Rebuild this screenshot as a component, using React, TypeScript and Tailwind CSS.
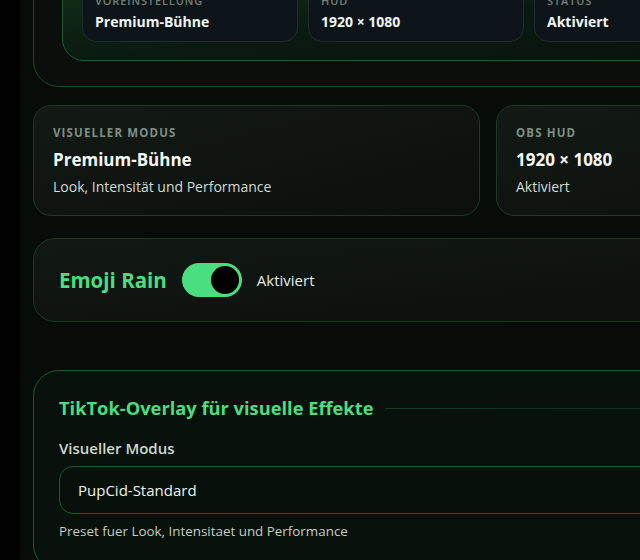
import React from "react";

function TopCard({ label, value }: { label: string; value: string }) {
  return (
    <div className="w-[216px] shrink-0 rounded-[14px] border border-[#1f2b2c] bg-[#0e151a] px-[12px] pt-[10px] pb-[9px]">
      <div className="text-[11px] font-semibold uppercase leading-4 tracking-[0.08em] text-[#6f8074]">{label}</div>
      <div className="mt-[3px] text-[14px] font-bold leading-5 text-[#f2f5f2]">{value}</div>
    </div>
  );
}

function InfoCard({ label, value, desc }: { label: string; value: string; desc: string }) {
  return (
    <div className="rounded-[18px] border border-[#1c3b27] bg-gradient-to-br from-[#131915] to-[#0b100d] px-[19px] pt-[19px] pb-[18px]">
      <div className="text-[11.5px] font-bold uppercase leading-4 tracking-[0.1em] text-[#7f9083]">{label}</div>
      <div className="mt-[7px] text-[17px] font-bold leading-6 text-[#f4f7f4]">{value}</div>
      <div className="mt-[5px] text-[14px] leading-5 text-[#d3dbd4]">{desc}</div>
    </div>
  );
}

export default function App() {
  return (
    <div className="flex h-[560px] w-[640px] overflow-hidden bg-[#010201] font-['Open_Sans',sans-serif]">
      <div className="w-[20px] shrink-0 bg-[#010201]" />
      <div className="flex-1 overflow-hidden bg-[#070c09]">
        <div className="ml-[13px] mt-[-60px] w-[910px]">
          {/* top container */}
          <div className="rounded-[26px] border border-[#1a4a28] bg-[#0a0f0c] px-[28px] pt-[20px] pb-[25px]">
            <div className="rounded-[22px] border border-[#1f5a2d] bg-gradient-to-br from-[#11361c] via-[#0b1a10] to-[#0a110c] px-[19px] pt-[20px] pb-[18px]">
              <div className="flex gap-[10px]">
                <TopCard label="Voreinstellung" value="Premium-Bühne" />
                <TopCard label="HUD" value="1920 × 1080" />
                <TopCard label="Status" value="Aktiviert" />
              </div>
            </div>
          </div>

          {/* info cards */}
          <div className="mt-[18px] grid grid-cols-2 gap-[16px]">
            <InfoCard label="Visueller Modus" value="Premium-Bühne" desc="Look, Intensität und Performance" />
            <InfoCard label="OBS HUD" value="1920 × 1080" desc="Aktiviert" />
          </div>

          {/* emoji rain */}
          <div className="mt-[22px] flex items-center rounded-[22px] border border-[#1b3a25] bg-gradient-to-br from-[#121814] to-[#0a0f0c] px-[25px] pt-[24px] pb-[24px]">
            <div className="text-[20.5px] font-bold leading-7 text-[#4ade80]">Emoji Rain</div>
            <div className="ml-[15px] flex h-[34px] w-[60px] items-center justify-end rounded-full bg-[#4ade80] pr-[3px]">
              <div className="h-[28px] w-[28px] rounded-full bg-black" />
            </div>
            <div className="ml-[15px] text-[15px] leading-5 text-[#e6ece6]">Aktiviert</div>
          </div>

          {/* section */}
          <div className="mt-[48px] rounded-[26px] border border-[#1d5a2f] bg-[#08110b] px-[25px] pt-[23px] pb-[30px]">
            <div className="flex items-center">
              <div className="text-[18.3px] font-bold leading-7 text-[#4ade80]">TikTok-Overlay für visuelle Effekte</div>
              <div className="ml-[12px] h-px flex-1 bg-gradient-to-r from-[#163a20] to-[#0f2416]" />
            </div>
            <div className="mt-[16px] text-[15px] font-semibold leading-5 text-[#cfd9cf]">Visueller Modus</div>
            <div className="mt-[8px] flex h-[48px] items-center rounded-[14px] border border-[#1d5a2c] bg-[#07100a] px-[18px] text-[15px] text-[#eef2ee]">PupCid-Standard</div>
            <div className="mt-[8px] text-[13.4px] leading-[18px] text-[#c3cec4]">Preset fuer Look, Intensitaet und Performance</div>
          </div>
        </div>
      </div>
    </div>
  );
}
